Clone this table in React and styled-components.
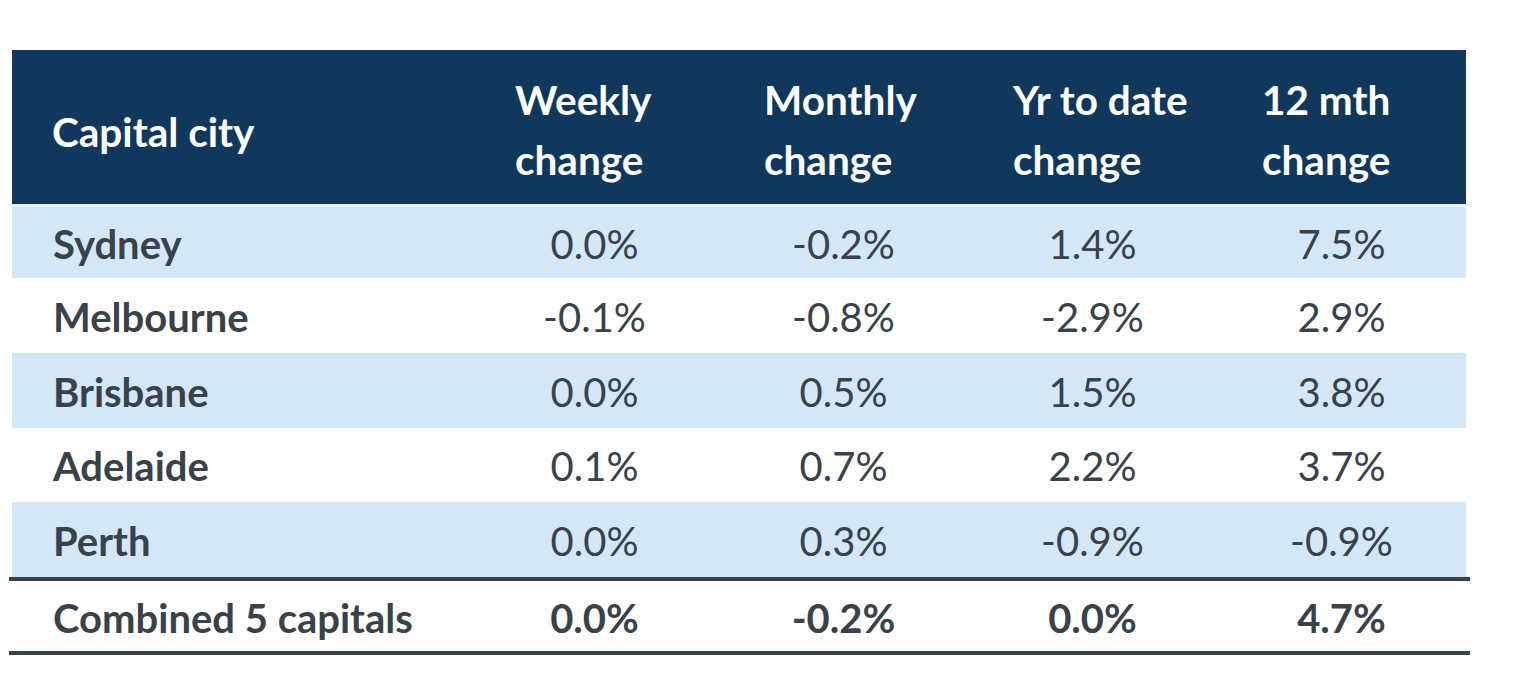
import React from "react";
import styled, { createGlobalStyle } from "styled-components";

const Global = createGlobalStyle`
  html, body { margin: 0; padding: 0; background: #ffffff; }
  body { font-family: Lato, "Open Sans", "Liberation Sans", sans-serif; }
`;

const Page = styled.div`
  padding: 50px 0 40px 12px;
  width: 1454px;
`;

const HeaderRow = styled.div`
  display: grid;
  grid-template-columns: 458px repeat(4, 1fr);
  height: 154px;
  background: #0f385c;
  color: #ffffff;
  font-weight: 700;
  font-size: 40.5px;
`;

const HeadFirst = styled.div`
  display: flex;
  align-items: center;
  padding: 10px 0 0 40px;
  line-height: 1;
`;

const HeadCell = styled.div`
  display: flex;
  flex-direction: column;
  justify-content: center;
  padding: 6px 0 0 45px;
  line-height: 60px;
`;

const Gap = styled.div`
  height: 3px;
  margin: 0 -4px 0 -3px;
  background: #efefef;
`;

const Row = styled.div`
  display: grid;
  grid-template-columns: 458px repeat(4, 1fr);
  align-items: center;
  box-sizing: border-box;
  padding-top: 3px;
  height: ${(p) => p.$h}px;
  background: ${(p) => (p.$shaded ? "#d3e7f7" : "#ffffff")};
  color: #37424b;
  font-size: 40px;
  font-weight: ${(p) => (p.$bold ? 700 : 400)};
`;

const City = styled.div`
  padding-left: 41px;
  font-weight: 700;
`;

const Num = styled.div`
  text-align: center;
`;

const Rule = styled.div`
  height: 4px;
  margin: 0 -4px 0 -3px;
  background: #37424b;
`;

const rows = [
  ["Sydney", "0.0%", "-0.2%", "1.4%", "7.5%"],
  ["Melbourne", "-0.1%", "-0.8%", "-2.9%", "2.9%"],
  ["Brisbane", "0.0%", "0.5%", "1.5%", "3.8%"],
  ["Adelaide", "0.1%", "0.7%", "2.2%", "3.7%"],
  ["Perth", "0.0%", "0.3%", "-0.9%", "-0.9%"],
];

const heads = [
  ["Weekly", "change"],
  ["Monthly", "change"],
  ["Yr to date", "change"],
  ["12 mth", "change"],
];

export default function App() {
  return (
    <>
      <Global />
      <Page>
        <HeaderRow>
          <HeadFirst>Capital city</HeadFirst>
          {heads.map((h) => (
            <HeadCell key={h[0]}>
              <span>{h[0]}</span>
              <span>{h[1]}</span>
            </HeadCell>
          ))}
        </HeaderRow>
        <Gap />
        {rows.map((r, i) => (
          <Row key={r[0]} $shaded={i % 2 === 0} $h={i === 0 ? 71 : 74.75}>
            <City>{r[0]}</City>
            {r.slice(1).map((v, j) => (
              <Num key={j}>{v}</Num>
            ))}
          </Row>
        ))}
        <Rule />
        <Row $h={70} $bold>
          <City>Combined 5 capitals</City>
          <Num>0.0%</Num>
          <Num>-0.2%</Num>
          <Num>0.0%</Num>
          <Num>4.7%</Num>
        </Row>
        <Rule />
      </Page>
    </>
  );
}
